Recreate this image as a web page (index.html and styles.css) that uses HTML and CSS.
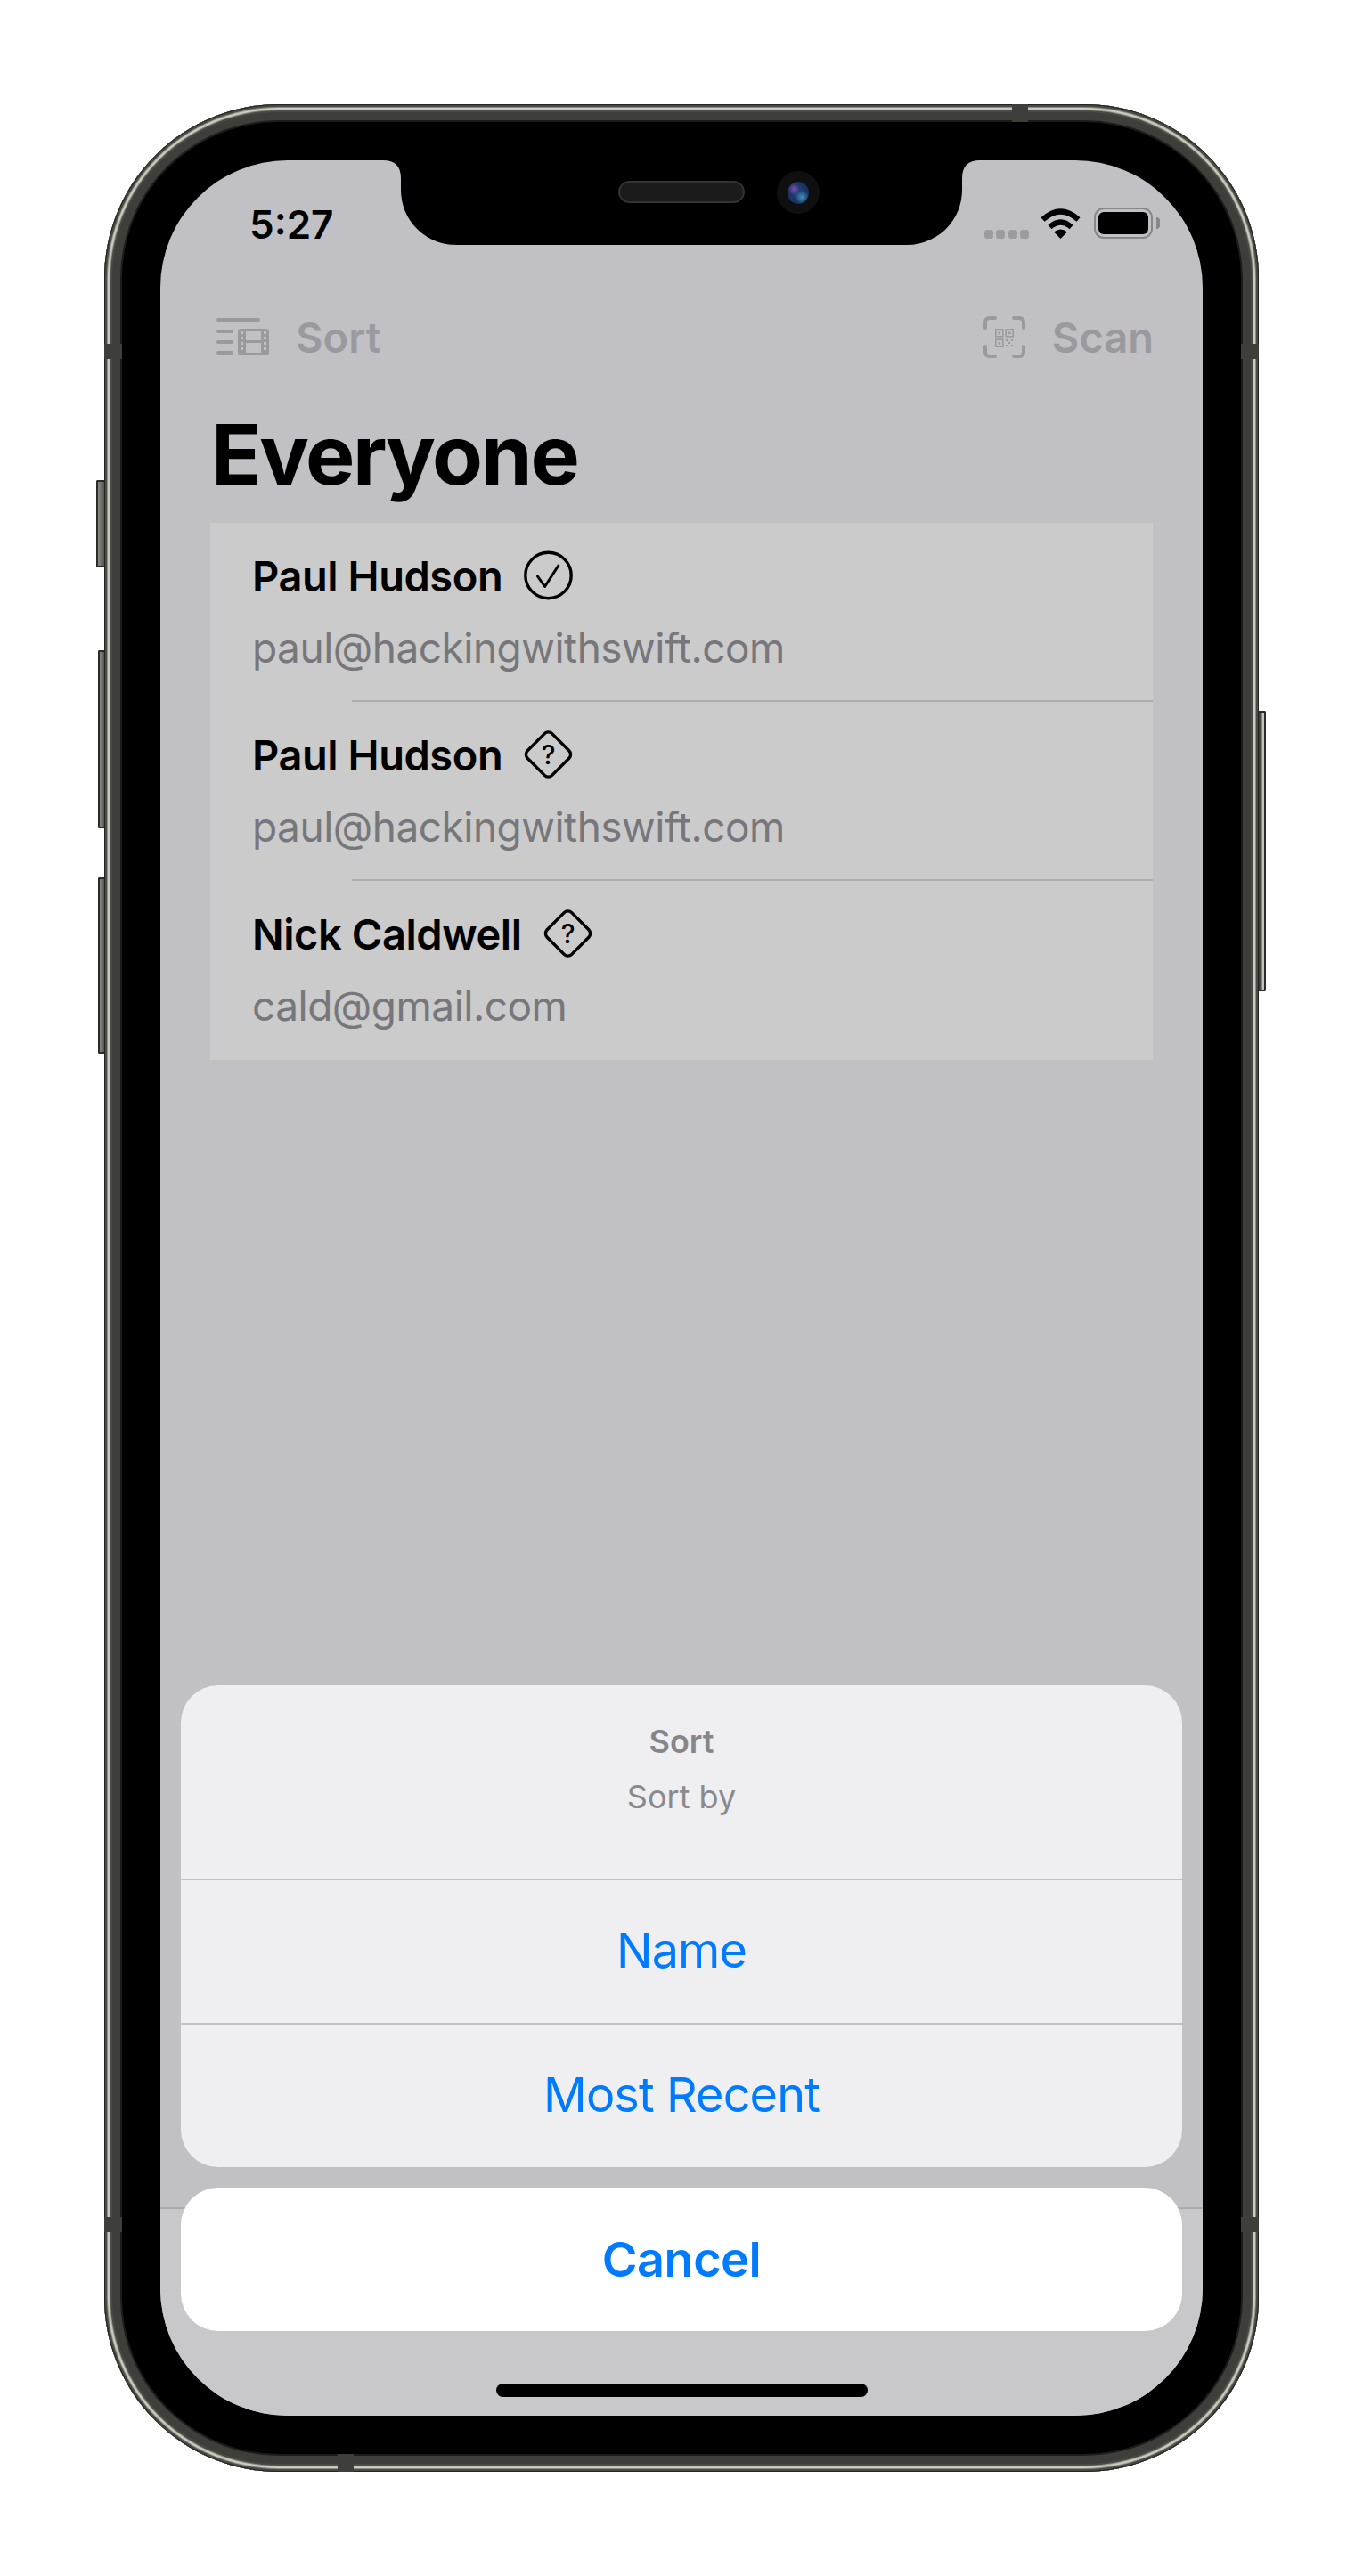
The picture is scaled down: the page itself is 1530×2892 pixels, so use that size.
FILE: index.html
```html
<!DOCTYPE html>
<html lang="en">
<head>
  <meta charset="UTF-8">
  <meta name="viewport" content="width=device-width, initial-scale=1.0">
  <title>Everyone</title>
  <link rel="stylesheet" href="styles.css">
</head>
<body>
  <div class="phone">
    <!-- hardware buttons -->
    <div class="side-btn silent"></div>
    <div class="side-btn vol-up"></div>
    <div class="side-btn vol-down"></div>
    <div class="side-btn power"></div>

    <!-- antenna bands -->
    <div class="band band-left-top"></div>
    <div class="band band-right-top"></div>
    <div class="band band-left-bottom"></div>
    <div class="band band-right-bottom"></div>
    <div class="band band-top"></div>
    <div class="band band-bottom"></div>

    <div class="screen">
      <svg class="notch" viewBox="0 0 670 95" width="670" height="95">
        <path d="M0 0H670Q650 0 650 20V33C650 68 622 95 588 95H82C48 95 20 68 20 33V20Q20 0 0 0Z" fill="#000"/>
      </svg>
      <div class="speaker"></div>
      <div class="camera"><div class="lens"></div></div>

      <div class="status">
        <span class="time">5:27</span>
        <div class="status-icons">
          <div class="signal"><i></i><i></i><i></i><i></i></div>
          <svg class="wifi" viewBox="0 0 45 34" width="45" height="34">
            <path d="M2.5 12.5Q22.5 -5.5 42.5 12.5" fill="none" stroke="#000" stroke-width="6"/>
            <path d="M10.5 21Q22.5 10 34.5 21" fill="none" stroke="#000" stroke-width="6"/>
            <path d="M22.5 34L15 26.5Q22.5 20.5 30 26.5Z" fill="#000"/>
          </svg>
          <div class="battery"><div class="battery-fill"></div></div>
          <div class="battery-nub"></div>
        </div>
      </div>

      <div class="nav">
        <div class="nav-item">
          <svg class="icon-sort" viewBox="0 0 60 42" width="60" height="42">
            <g fill="#9a9a9e">
              <rect x="0" y="0" width="49" height="4" rx="2"/>
              <rect x="0" y="13" width="19" height="4" rx="2"/>
              <rect x="0" y="25" width="19" height="4" rx="2"/>
              <rect x="0" y="37" width="19" height="4" rx="2"/>
              <rect x="24" y="12" width="35" height="30" rx="4"/>
            </g>
            <g fill="#c1c0c5">
              <rect x="33" y="15" width="17" height="10"/>
              <rect x="33" y="28" width="17" height="11"/>
              <rect x="27" y="15" width="3" height="3"/>
              <rect x="27" y="21" width="3" height="3"/>
              <rect x="27" y="27" width="3" height="3"/>
              <rect x="27" y="33" width="3" height="3"/>
              <rect x="53" y="15" width="3" height="3"/>
              <rect x="53" y="21" width="3" height="3"/>
              <rect x="53" y="27" width="3" height="3"/>
              <rect x="53" y="33" width="3" height="3"/>
            </g>
          </svg>
          <span>Sort</span>
        </div>
        <div class="nav-item scan">
          <svg class="icon-scan" viewBox="0 0 47 47" width="47" height="47">
            <path d="M2 13V7Q2 2 7 2H13M34 2H40Q45 2 45 7V13M45 34V40Q45 45 40 45H34M13 45H7Q2 45 2 40V34" fill="none" stroke="#9a9a9e" stroke-width="4" stroke-linecap="round"/>
            <g fill="none" stroke="#9a9a9e" stroke-width="1.6">
              <rect x="13.8" y="14.8" width="8" height="8"/>
              <rect x="25.2" y="14.8" width="8" height="8"/>
              <rect x="13.8" y="26.2" width="8" height="8"/>
            </g>
            <g fill="#9a9a9e">
              <rect x="16.5" y="17.5" width="2.6" height="2.6"/>
              <rect x="28" y="17.5" width="2.6" height="2.6"/>
              <rect x="16.5" y="29" width="2.6" height="2.6"/>
              <rect x="25" y="26" width="2" height="2"/>
              <rect x="31" y="26" width="2" height="2"/>
              <rect x="28" y="29" width="2" height="2"/>
              <rect x="25" y="32" width="2" height="2"/>
              <rect x="31" y="32" width="2" height="2"/>
            </g>
          </svg>
          <span>Scan</span>
        </div>
      </div>

      <h1 class="title">Everyone</h1>

      <div class="list">
        <div class="row">
          <div class="name">
            <span>Paul Hudson</span>
            <svg class="badge" viewBox="0 0 55 56" width="55" height="56">
              <circle cx="27.5" cy="28" r="25.7" fill="none" stroke="#000" stroke-width="3.4"/>
              <path d="M15.5 29L23.6 40.5L38.8 17" fill="none" stroke="#000" stroke-width="3" stroke-linecap="round" stroke-linejoin="round"/>
            </svg>
          </div>
          <div class="email">paul@hackingwithswift.com</div>
        </div>
        <div class="sep"></div>
        <div class="row">
          <div class="name">
            <span>Paul Hudson</span>
            <svg class="badge" viewBox="0 0 55 56" width="55" height="56">
              <rect x="8" y="8.5" width="39" height="39" rx="6" transform="rotate(45 27.5 28)" fill="none" stroke="#000" stroke-width="3.4"/>
              <text x="27.5" y="39" text-anchor="middle" class="badge-mark">?</text>
            </svg>
          </div>
          <div class="email">paul@hackingwithswift.com</div>
        </div>
        <div class="sep"></div>
        <div class="row">
          <div class="name">
            <span>Nick Caldwell</span>
            <svg class="badge" viewBox="0 0 55 56" width="55" height="56">
              <rect x="8" y="8.5" width="39" height="39" rx="6" transform="rotate(45 27.5 28)" fill="none" stroke="#000" stroke-width="3.4"/>
              <text x="27.5" y="39" text-anchor="middle" class="badge-mark">?</text>
            </svg>
          </div>
          <div class="email">cald@gmail.com</div>
        </div>
      </div>

      <div class="toolbar">
        <div class="home-bar"></div>
      </div>

      <div class="sheet">
        <div class="sheet-group">
          <div class="sheet-head">
            <div class="sheet-title">Sort</div>
            <div class="sheet-sub">Sort by</div>
          </div>
          <div class="sheet-action">Name</div>
          <div class="sheet-action">Most Recent</div>
        </div>
        <div class="sheet-cancel">Cancel</div>
      </div>
    </div>
  </div>
</body>
</html>
```

FILE: styles.css
```css
body {
  margin: 0;
  background-color: #fff;
  font-family: Inter, "Noto Sans", sans-serif;
  color: #000;
}

.phone {
  position: relative;
  box-sizing: border-box;
  width: 1296px;
  height: 2658px;
  margin: 117px 0 0 117px;
  padding: 63px;
  background-color: #000;
  border-radius: 196px;
  box-shadow:
    inset 0 0 0 1px #232321,
    inset 0 0 0 3px #4a4a46,
    inset 0 0 0 4px #8f8f86,
    inset 0 0 0 6px #cacabe,
    inset 0 0 0 7px #8f8f86,
    inset 0 0 0 9px #4a4a46,
    inset 0 0 0 18px #3e3e3b,
    inset 0 0 0 20px #1c1c1b;
}

/* hardware buttons */
.side-btn {
  position: absolute;
  box-sizing: border-box;
  border: 2px solid #2b2b29;
  background: linear-gradient(90deg, #8a8a84, #565653);
}

.silent { left: -9px; top: 422px; width: 9px; height: 98px; border-right: none; border-radius: 2px 0 0 2px; }
.vol-up { left: -7px; top: 613px; width: 7px; height: 200px; border-right: none; border-radius: 2px 0 0 2px; }
.vol-down { left: -7px; top: 868px; width: 7px; height: 198px; border-right: none; border-radius: 2px 0 0 2px; }

.power {
  right: -8px;
  top: 681px;
  width: 8px;
  height: 315px;
  border-left: none;
  border-radius: 0 2px 2px 0;
  background: linear-gradient(90deg, #3a3a38, #53534f 50%, #c4c4ba 70%, #c4c4ba);
}

.band {
  position: absolute;
  background-color: #3e3e3a;
}

.band-left-top { left: 0; top: 269px; width: 20px; height: 17px; }
.band-right-top { right: 0; top: 269px; width: 20px; height: 17px; }
.band-left-bottom { left: 0; top: 2372px; width: 20px; height: 17px; }
.band-right-bottom { right: 0; top: 2372px; width: 20px; height: 17px; }
.band-top { left: 1019px; top: 0; width: 18px; height: 20px; }
.band-bottom { left: 262px; bottom: 0; width: 18px; height: 20px; }

.screen {
  position: relative;
  display: flex;
  flex-direction: column;
  width: 1170px;
  height: 2532px;
  overflow: hidden;
  background-color: #c1c0c5;
  border-radius: 143px;
}

/* notch */
.notch {
  position: absolute;
  left: 250px;
  top: 0;
}

.speaker {
  position: absolute;
  left: 514px;
  top: 23px;
  box-sizing: border-box;
  width: 142px;
  height: 25px;
  background-color: #1b1b1b;
  border: 2px solid #333;
  border-radius: 13px;
}

.camera {
  position: absolute;
  left: 692px;
  top: 12px;
  display: flex;
  align-items: center;
  justify-content: center;
  width: 48px;
  height: 48px;
  background-color: #0f0f10;
  border-radius: 50%;
}

.lens {
  width: 24px;
  height: 25px;
  border-radius: 50%;
  background:
    radial-gradient(circle at 30% 32%, #7a4fb0 0, transparent 28%),
    radial-gradient(circle at 68% 70%, #3f93b8 0, transparent 32%),
    radial-gradient(circle at 50% 50%, #23457f 0, #1a2f5c 70%, #0d1a33 100%);
}

/* status bar */
.status {
  display: flex;
  justify-content: space-between;
  align-items: flex-end;
  height: 88px;
  padding: 0 48px 0 100px;
}

.time {
  font-size: 44px;
  font-weight: 600;
  line-height: 32px;
}

.status-icons {
  display: flex;
  align-items: flex-end;
}

.signal {
  display: flex;
  gap: 3.3px;
  margin-right: 13px;
}

.signal i {
  width: 10px;
  height: 10px;
  background-color: #9c9ca0;
  border-radius: 3px;
}

.wifi {
  display: block;
  margin-right: 15px;
}

.battery {
  box-sizing: border-box;
  width: 66px;
  height: 35px;
  padding: 3px;
  border: 2.5px solid #87878b;
  border-radius: 11px;
}

.battery-fill {
  height: 100%;
  background-color: #000;
  border-radius: 6px;
}

.battery-nub {
  width: 4px;
  height: 13px;
  margin: 0 0 11px 4px;
  background-color: #87878b;
  border-radius: 0 4px 4px 0;
}

/* nav */
.nav {
  display: flex;
  justify-content: space-between;
  align-items: center;
  height: 48px;
  margin-top: 86px;
  padding: 0 55px 0 63px;
  color: #9a9a9e;
  font-size: 47px;
  font-weight: 580;
}

.nav-item {
  display: flex;
  align-items: center;
  gap: 29px;
}

.nav-item.scan {
  gap: 30px;
}

.icon-sort {
  display: block;
}

.icon-scan {
  display: block;
}

.title {
  margin: 60px 0 0 57px;
  font-size: 93px;
  font-weight: 700;
  letter-spacing: -2.3px;
  line-height: 96px;
}

/* list */
.list {
  margin: 29px 56px 0;
  padding-bottom: 2px;
  background-color: #cbcbcc;
}

.row {
  box-sizing: border-box;
  height: 199px;
  padding: 31px 0 0 47px;
}

.name {
  display: flex;
  align-items: center;
  gap: 24px;
  height: 56px;
  font-size: 47px;
  font-weight: 600;
  letter-spacing: -0.45px;
}

.badge-mark {
  font-family: Inter, sans-serif;
  font-size: 30px;
  font-weight: 500;
}

.email {
  margin-top: 25px;
  color: #77777b;
  font-size: 46px;
  letter-spacing: -0.5px;
  line-height: 56px;
}

.sep {
  height: 2px;
  margin-left: 159px;
  background-color: #adadae;
}

/* toolbar behind the sheet */
.toolbar {
  display: flex;
  justify-content: center;
  align-items: flex-end;
  box-sizing: border-box;
  height: 234px;
  margin-top: auto;
  padding-bottom: 21px;
  background-color: #c8c8ca;
  border-top: 2px solid #aaaaad;
}

.home-bar {
  width: 417px;
  height: 15px;
  background-color: #000;
  border-radius: 8px;
}

/* action sheet */
.sheet {
  position: absolute;
  left: 23px;
  right: 23px;
  bottom: 95px;
}

.sheet-group {
  overflow: hidden;
  background-color: #efeff1;
  border-radius: 42px;
}

.sheet-head {
  box-sizing: border-box;
  height: 217px;
  padding-top: 40px;
  text-align: center;
}

.sheet-title {
  color: #85858a;
  font-size: 36px;
  font-weight: 600;
  line-height: 46px;
}

.sheet-sub {
  margin-top: 16px;
  color: #8a8a8e;
  font-size: 36px;
  line-height: 46px;
}

.sheet-action {
  box-sizing: border-box;
  height: 162px;
  border-top: 2px solid #c2c2c5;
  color: #007aff;
  font-size: 54px;
  letter-spacing: -0.9px;
  line-height: 158px;
  text-align: center;
}

.sheet-cancel {
  height: 161px;
  margin-top: 23px;
  background-color: #fff;
  border-radius: 42px;
  color: #007aff;
  font-size: 54px;
  font-weight: 600;
  letter-spacing: -0.5px;
  line-height: 161px;
  text-align: center;
}
```
